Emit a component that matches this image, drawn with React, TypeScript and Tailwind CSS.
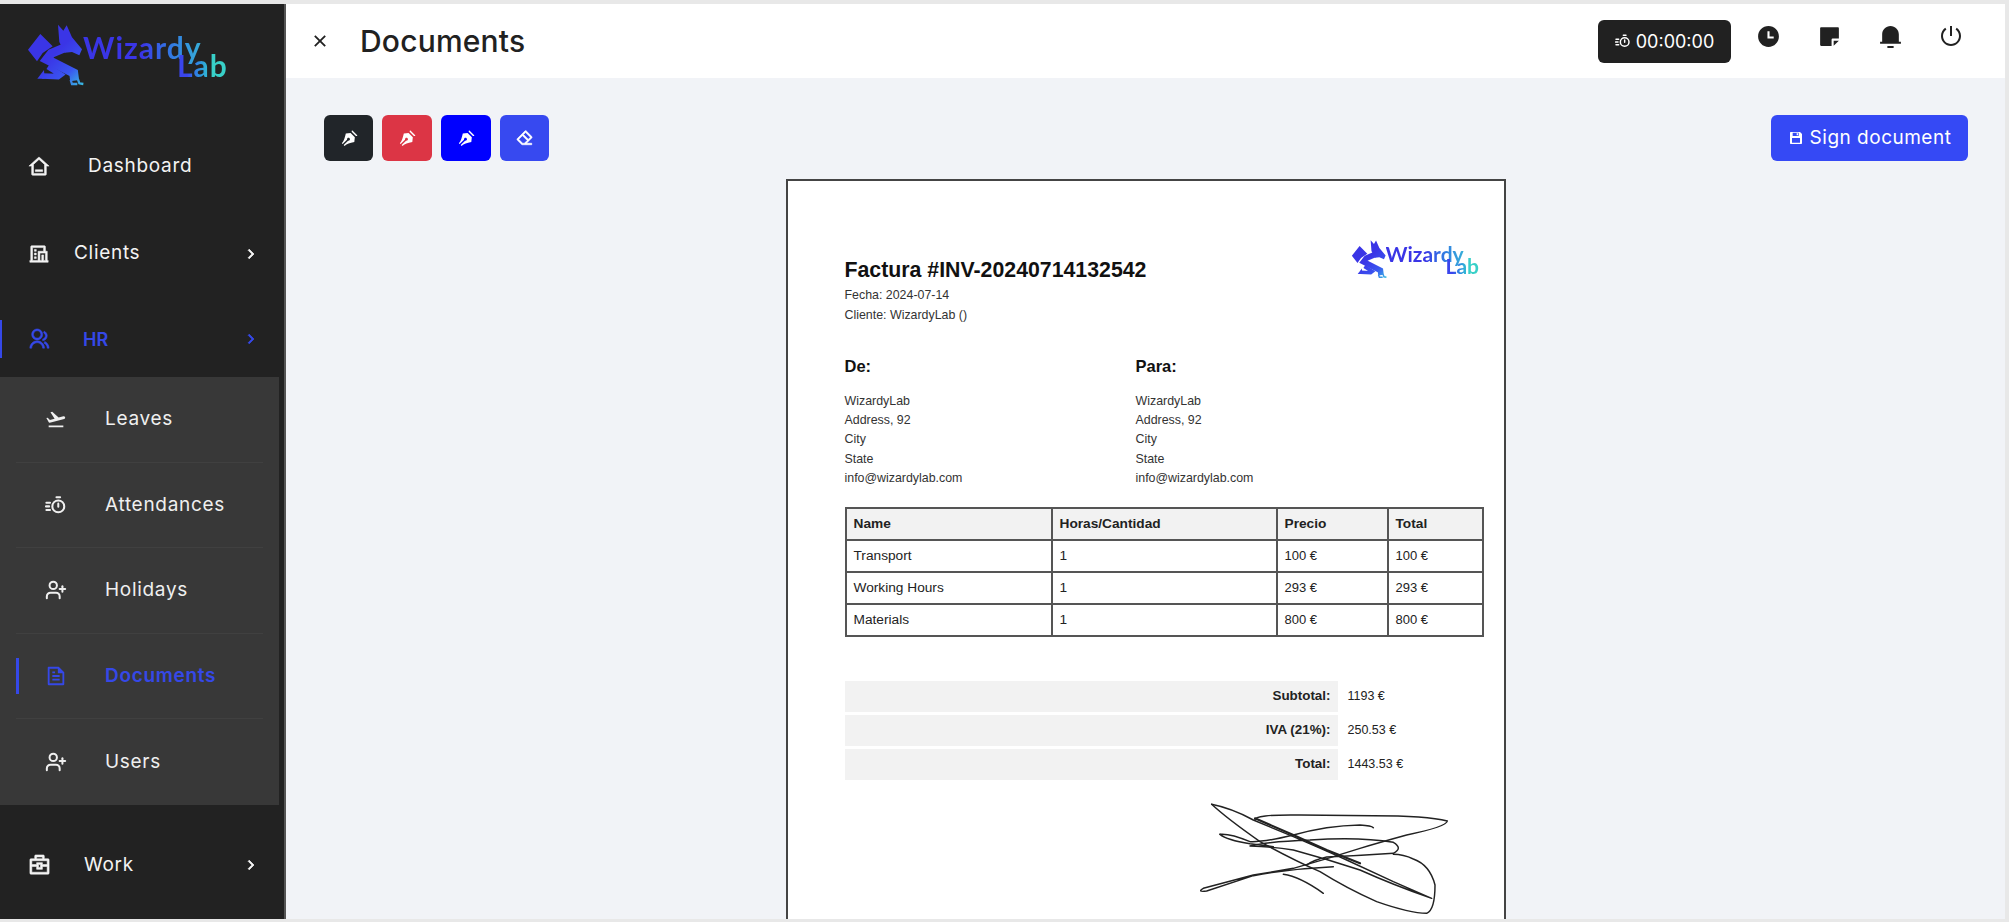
import { UserPlus } from "lucide-react";
import {
  RiArrowRightSLine,
  RiBriefcase4Line,
  RiCloseFill,
  RiEraserLine,
  RiFileTextLine,
  RiFlightTakeoffFill,
  RiGroupLine,
  RiHome3Line,
  RiHotelLine,
  RiNotification3Fill,
  RiPenNibFill,
  RiSave3Fill,
  RiShutDownLine,
  RiStickyNoteFill,
  RiTimeFill,
} from "react-icons/ri";

const UI_FONT = "font-['Inter','Liberation_Sans',sans-serif]";
const DOC_FONT = "font-['Liberation_Sans',Arial,sans-serif]";

// remix has no stopwatch with speed lines that matches, so it is drawn here
function TimerLines({ className }: { className?: string }) {
  return (
    <svg viewBox="0 0 24 24" className={className} fill="none" stroke="currentColor" strokeWidth="2.2" strokeLinecap="round">
      <circle cx="14.5" cy="13.5" r="6.5" />
      <path d="M14.5 10.5v3.5M12.5 3.5h4M1.5 9.5h4M1 13.5h3.5M1.5 17.5h4" />
    </svg>
  );
}

function AddUser({ className }: { className?: string }) {
  return <UserPlus className={className} strokeWidth={2.2} />;
}

const SUB_ITEMS = [
  { label: "Leaves", icon: RiFlightTakeoffFill },
  { label: "Attendances", icon: TimerLines },
  { label: "Holidays", icon: AddUser },
  { label: "Documents", icon: RiFileTextLine, active: true },
  { label: "Users", icon: AddUser },
];

const LINES = [
  { name: "Transport", qty: "1", price: "100 €", total: "100 €" },
  { name: "Working Hours", qty: "1", price: "293 €", total: "293 €" },
  { name: "Materials", qty: "1", price: "800 €", total: "800 €" },
];

const TOTALS = [
  { label: "Subtotal:", value: "1193 €" },
  { label: "IVA (21%):", value: "250.53 €" },
  { label: "Total:", value: "1443.53 €" },
];

const PARTY = ["WizardyLab", "Address, 92", "City", "State", "info@wizardylab.com"];

function Dragon({ id, className }: { id: string; className: string }) {
  const paint = `url(#${id})`;
  return (
    <svg viewBox="0 0 210 216" className={className}>
      <defs>
        <linearGradient id={id} gradientUnits="userSpaceOnUse" x1="40" y1="40" x2="190" y2="200">
          <stop offset="0.4" stopColor="#3a35e6" />
          <stop offset="0.72" stopColor="#3a55f0" />
          <stop offset="1" stopColor="#38c4e0" />
        </linearGradient>
      </defs>
      <path d="M18 95 L55 48 L92 85 L62 105 L45 130 Z" fill={paint} />
      <path d="M108 20 L124 38 L134 22 L150 58 L180 94 L172 112 L150 102 L128 104 L112 72 Z" fill={paint} />
      <g fill="none" stroke={paint}>
        <path d="M136 86 L88 106 L74 124 L155 165 L158 188" strokeWidth="27" />
        <path d="M78 146 L116 170 L108 176 L60 174" strokeWidth="17" />
        <path d="M146 186 L150 198 L166 198 M168 184 L172 196 L184 198" strokeWidth="7" />
      </g>
      <path d="M68 182 L46 182 L66 156 Z" fill={paint} />
    </svg>
  );
}

function WizardyText({ className, labClassName }: { className: string; labClassName: string }) {
  return (
    <div className={`relative font-['Lato',sans-serif] font-bold leading-none ${className}`}>
      <span className="bg-gradient-to-r from-[#3a35e6] from-50% to-[#38b0d8] bg-clip-text text-transparent">Wizardy</span>
      <span className={`absolute bg-gradient-to-r from-[#3a45ec] from-20% to-[#38d0c8] to-70% bg-clip-text text-transparent ${labClassName}`}>
        Lab
      </span>
    </div>
  );
}

function Sidebar() {
  return (
    <aside className={`flex w-[286px] shrink-0 flex-col border-r-2 border-[#555555] bg-[#222222] ${UI_FONT}`}>
      <div className="flex h-[119px] shrink-0 items-start pl-[22px] pt-[14px]">
        <Dragon id="dragon-side" className="h-[72px] w-[70px] shrink-0" />
        <WizardyText className="mt-[14px] -ml-[9px] text-[30px] tracking-[1px]" labClassName="left-[94px] top-[18px]" />
      </div>

      <div className="flex h-[87px] shrink-0 items-center text-[#f3f3f3]">
        <RiHome3Line className="ml-[28px] text-[22px]" stroke="currentColor" strokeWidth={0.6} />
        <span className="ml-[38px] text-[19px] tracking-[0.7px]">Dashboard</span>
      </div>
      <div className="flex h-[87px] shrink-0 items-center text-[#f3f3f3]">
        <RiHotelLine className="ml-[28px] text-[22px]" stroke="currentColor" strokeWidth={0.6} />
        <span className="ml-[24px] text-[19px] tracking-[0.7px]">Clients</span>
        <RiArrowRightSLine className="ml-auto mr-[24px] text-[18px]" stroke="currentColor" strokeWidth={1} />
      </div>
      <div className="relative flex h-[80px] shrink-0 items-center pt-[4px] text-[#3548e8]">
        <div className="absolute left-0 top-[23px] h-[38px] w-[2px] bg-[#3548e8]" />
        <RiGroupLine className="ml-[28px] text-[22px]" stroke="currentColor" strokeWidth={0.6} />
        <span className="ml-[33px] text-[18px] font-semibold">HR</span>
        <RiArrowRightSLine className="ml-auto mr-[24px] text-[18px]" stroke="currentColor" strokeWidth={1} />
      </div>

      <div className="mr-[5px] shrink-0 bg-[#383838] px-[16px]">
        {SUB_ITEMS.map((item, i) => {
          const Icon = item.icon;
          return (
            <div
              key={item.label}
              className={`relative flex h-[85.5px] items-center ${i < SUB_ITEMS.length - 1 ? "border-b border-[#404040]" : ""} ${
                item.active ? "font-semibold text-[#3548e8]" : "text-[#efefef]"
              }`}
            >
              {item.active && <div className="absolute left-0 top-[24px] h-[36px] w-[3px] bg-[#3548e8]" />}
              <Icon className="ml-[29px] h-[22px] w-[22px]" />
              <span className="ml-[38px] text-[19px] tracking-[0.7px]">{item.label}</span>
            </div>
          );
        })}
      </div>

      <div className="mt-[17px] flex h-[87px] shrink-0 items-center text-[#f3f3f3]">
        <RiBriefcase4Line className="ml-[28px] text-[23px]" stroke="currentColor" strokeWidth={0.6} />
        <span className="ml-[33px] text-[19px] tracking-[0.7px]">Work</span>
        <RiArrowRightSLine className="ml-auto mr-[24px] text-[18px]" stroke="currentColor" strokeWidth={1} />
      </div>
    </aside>
  );
}

function Header() {
  return (
    <header className={`flex h-[74px] shrink-0 items-center bg-white pl-[23px] pr-[42px] ${UI_FONT}`}>
      <RiCloseFill className="text-[22px] text-[#212121]" />
      <h1 className="ml-[29px] text-[30px] font-medium tracking-[0.2px] text-[#212121]">Documents</h1>
      <div className="ml-auto flex h-[43px] w-[133px] items-center justify-center gap-[5px] rounded-[6px] bg-[#212121] text-white">
        <TimerLines className="h-[16px] w-[16px]" />
        <span className="text-[18px]">00:00:00</span>
      </div>
      <div className="ml-[25px] flex items-center gap-[36px] pb-[10px] text-[#212121]">
        <RiTimeFill className="text-[25px]" />
        <RiStickyNoteFill className="text-[25px]" />
        <RiNotification3Fill className="text-[25px]" />
        <RiShutDownLine className="text-[24px]" />
      </div>
    </header>
  );
}

function Toolbar() {
  return (
    <div className="flex items-start justify-between pl-[38px] pr-[37px] pt-[37px]">
      <div className="flex gap-[9px] text-white">
        <button className="flex h-[46px] w-[49px] items-center justify-center rounded-[6px] bg-[#212529]">
          <RiPenNibFill className="text-[18px]" />
        </button>
        <button className="flex h-[46px] w-[50px] items-center justify-center rounded-[6px] bg-[#dc3545]">
          <RiPenNibFill className="text-[18px]" />
        </button>
        <button className="flex h-[46px] w-[50px] items-center justify-center rounded-[6px] bg-[#0000ff]">
          <RiPenNibFill className="text-[18px]" />
        </button>
        <button className="flex h-[46px] w-[49px] items-center justify-center rounded-[6px] bg-[#3749f0]">
          <RiEraserLine className="text-[18px]" stroke="currentColor" strokeWidth={0.8} />
        </button>
      </div>
      <button className={`flex h-[46px] w-[197px] items-center justify-center gap-[6px] rounded-[6px] bg-[#3549f5] text-[19px] tracking-[0.5px] text-white ${UI_FONT}`}>
        <RiSave3Fill className="text-[16px]" />
        Sign document
      </button>
    </div>
  );
}

function Party({ title, className }: { title: string; className: string }) {
  return (
    <div className={className}>
      <h3 className="text-[16.5px] font-bold leading-[18px] text-[#111111]">{title}</h3>
      <div className="mt-[17px] text-[12.4px] leading-[19.2px] text-[#333333]">
        {PARTY.map((line) => (
          <div key={line}>{line}</div>
        ))}
      </div>
    </div>
  );
}

function Signature() {
  return (
    <svg viewBox="0 0 900 426" className="ml-[315px] h-[142px] w-[300px] shrink-0" fill="none" stroke="#222222" strokeWidth="4.4" strokeLinecap="round" strokeLinejoin="round">
      <path d="M155 58 Q215 70 280 105 L400 155 Q470 185 560 225 L700 290 L815 340 Q700 300 600 255 Q500 222 400 195 Q340 185 270 183 Q320 170 450 165 Q600 155 700 172 Q730 190 700 205 Q600 212 500 216 Q460 225 440 240" />
      <path d="M155 58 Q200 100 300 170 Q400 225 480 260 Q560 310 650 350 Q750 385 800 385 Q825 375 825 300 Q810 240 760 222 Q730 208 700 208" />
      <path d="M285 105 Q280 88 420 90 L640 92 Q800 92 862 108 Q860 125 740 150 Q660 172 600 190 Q500 222 400 250 L280 270 L130 310 Q110 322 140 318 L280 272 Q400 250 520 245" />
      <path d="M180 148 Q210 145 270 170 Q310 172 400 150 Q500 122 600 120 Q635 122 640 128" />
      <path d="M180 148 Q200 165 270 176 L340 185" />
      <path d="M285 100 L400 150 L500 195 L600 235" strokeWidth="6.5" />
      <path d="M370 268 Q420 275 490 325" />
    </svg>
  );
}

function InvoiceDoc() {
  return (
    <div className={`relative mx-auto mt-[18px] h-[800px] w-[720px] shrink-0 overflow-hidden border-2 border-[#444444] bg-white pl-[57px] pr-[20px] ${DOC_FONT}`}>
      <div className="absolute left-[560px] top-[55px] flex items-start">
        <Dragon id="dragon-doc" className="h-[45px] w-[44px] shrink-0" />
        <WizardyText className="mt-[7px] -ml-[6px] text-[21px]" labClassName="left-[60px] top-[12px]" />
      </div>

      <h2 className="pt-[77px] text-[21.3px] font-bold leading-[24px] text-[#111111]">Factura #INV-20240714132542</h2>
      <p className="mt-[3px] text-[12.4px] leading-[20px] text-[#333333]">Fecha: 2024-07-14</p>
      <p className="text-[12.4px] leading-[20px] text-[#333333]">Cliente: WizardyLab ()</p>

      <div className="mt-[32px] flex">
        <Party title="De:" className="w-[291px]" />
        <Party title="Para:" className="flex-1" />
      </div>

      <table className="mt-[19px] w-full table-fixed border-collapse text-[13.7px] text-[#222222]">
        <thead>
          <tr className="h-[32px] bg-[#f2f2f2] text-left">
            <th className="w-[206px] border-2 border-[#555555] px-[7px] font-bold">Name</th>
            <th className="w-[225px] border-2 border-[#555555] px-[7px] font-bold">Horas/Cantidad</th>
            <th className="w-[111px] border-2 border-[#555555] px-[7px] font-bold">Precio</th>
            <th className="border-2 border-[#555555] px-[7px] font-bold">Total</th>
          </tr>
        </thead>
        <tbody>
          {LINES.map((row) => (
            <tr key={row.name} className="h-[32px]">
              <td className="border-2 border-[#555555] px-[7px]">{row.name}</td>
              <td className="border-2 border-[#555555] px-[7px]">{row.qty}</td>
              <td className="border-2 border-[#555555] px-[7px] text-[13px]">{row.price}</td>
              <td className="border-2 border-[#555555] px-[7px] text-[13px]">{row.total}</td>
            </tr>
          ))}
        </tbody>
      </table>

      <div className="mt-[44px] flex flex-col gap-[3px] text-[12.5px] text-[#222222]">
        {TOTALS.map((row) => (
          <div key={row.label} className="flex h-[31px] items-center">
            <div className="flex h-full w-[493px] items-center justify-end bg-[#f2f2f2] pr-[7px] text-[13.4px] font-bold">{row.label}</div>
            <div className="pl-[10px]">{row.value}</div>
          </div>
        ))}
      </div>

      <div className="mt-[5px] flex">
        <Signature />
      </div>
    </div>
  );
}

export default function App() {
  return (
    <div className="flex h-[922px] w-[2009px] overflow-hidden bg-[#e8e8e8] pb-[3px] pr-[4px] pt-[4px]">
      <Sidebar />
      <main className="flex min-w-0 flex-1 flex-col">
        <Header />
        <div className="flex min-h-0 flex-1 flex-col overflow-hidden bg-[#f1f3f7]">
          <Toolbar />
          <InvoiceDoc />
        </div>
      </main>
    </div>
  );
}
